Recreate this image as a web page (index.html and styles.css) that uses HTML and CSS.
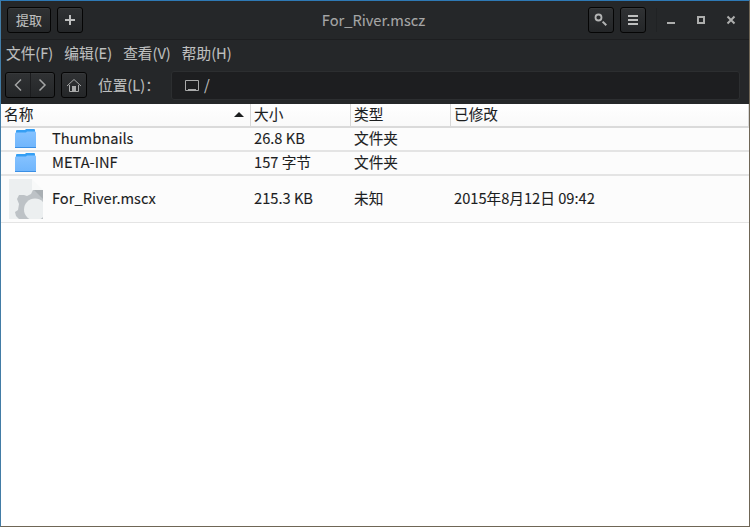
FILE: index.html
```html
<!DOCTYPE html>
<html lang="zh-CN">
<head>
<meta charset="utf-8">
<title>For_River.mscz</title>
<link rel="stylesheet" href="styles.css">
</head>
<body>
<div class="window">
  <header class="titlebar">
    <div class="side">
      <button class="btn extract">提取</button>
      <button class="btn square"><svg width="24" height="24"><path d="M7 12h10M12 7v10" stroke="#bebfbf" stroke-width="2"/></svg></button>
    </div>
    <h1 class="title">For_River.mscz</h1>
    <div class="side end">
      <button class="btn square"><svg width="24" height="24"><circle cx="9.500" cy="9.500" r="3" fill="none" stroke="#b4b5b5" stroke-width="1.8"/><path d="M13.600 13.600l3.700 3.700" stroke="#b4b5b5" stroke-width="2"/></svg></button>
      <button class="btn square"><svg width="24" height="24"><path d="M7 8h10M7 12h10M7 16h10" stroke="#bebfbf" stroke-width="2"/></svg></button>
      <div class="controls">
        <svg width="30" height="24"><path d="M10 15h8" stroke="#adaead" stroke-width="2"/></svg>
        <svg width="30" height="24"><path d="M11 9h6v6h-6z" fill="none" stroke="#adaead" stroke-width="2"/></svg>
        <svg width="28" height="24"><path d="M10.500 8.500l7 7M17.500 8.500l-7 7" stroke="#adaead" stroke-width="2"/></svg>
      </div>
    </div>
  </header>
  <nav class="menubar"><span>文件(F)</span><span>编辑(E)</span><span>查看(V)</span><span>帮助(H)</span></nav>
  <div class="toolbar">
    <div class="nav">
      <button><svg width="24" height="24"><path d="M15 6.500L9.500 12l5.500 5.500" fill="none" stroke="#a4a5a5" stroke-width="1.500"/></svg></button>
      <button><svg width="24" height="24"><path d="M8.500 6.500L14 12l-5.500 5.500" fill="none" stroke="#a4a5a5" stroke-width="1.500"/></svg></button>
    </div>
    <button class="btn square"><svg width="24" height="24"><path d="M5 13l7-6.500 7 6.500M7.500 12v6.500h9V12" fill="none" stroke="#a9aaaa"/><path d="M10 13h4v5h-4z" fill="#a9aaaa"/></svg></button>
    <label class="label">位置(L)：</label>
    <div class="entry">
      <svg width="14" height="11"><path d="M.5.5h13v10H.5z" fill="none" stroke="#a9aaaa"/><path d="M3 9.500h8" stroke="#a9aaaa"/></svg>
      <span>/</span>
    </div>
  </div>
  <main class="list">
    <div class="row head">
      <div class="cell">名称<svg class="sort" width="10" height="5"><path d="M0 5L5 0l5 5z" fill="#1c1e1f"/></svg></div>
      <div class="cell">大小</div><div class="cell">类型</div><div class="cell">已修改</div>
    </div>
    <div class="row">
      <div class="cell name"><svg class="folder" width="21" height="19"><use href="#folder"/></svg>Thumbnails</div>
      <div class="cell">26.8 KB</div><div class="cell">文件夹</div><div class="cell"></div>
    </div>
    <div class="row">
      <div class="cell name"><svg class="folder" width="21" height="19"><use href="#folder"/></svg>META-INF</div>
      <div class="cell">157 字节</div><div class="cell">文件夹</div><div class="cell"></div>
    </div>
    <div class="row tall">
      <div class="cell name"><svg class="doc" width="34" height="40">
        <clipPath id="page"><path d="M0 0h23v11h11v29H0z"/></clipPath>
        <path d="M0 0h23v11h11v29H0z" fill="#eceff0"/><path d="M23 0l11 11H23z" fill="#f8f9f9"/>
        <g clip-path="url(#page)">
          <path d="M10 16h5l3 1 4-2 2-4h10v29H10l-3-3-1-4 3-2 1-6-2-5z" fill="#bdc2c6"/>
          <path d="M25 11h9v9z" fill="#a9afb3"/><circle cx="26" cy="30.500" r="11" fill="#eceff0"/>
        </g>
      </svg>For_River.mscx</div>
      <div class="cell">215.3 KB</div><div class="cell">未知</div><div class="cell">2015年8月12日 09:42</div>
    </div>
  </main>
</div>
<svg class="defs" width="0" height="0">
  <defs>
    <linearGradient id="blue" x2="0" y2="1"><stop stop-color="#85c2ff"/><stop offset="1" stop-color="#6fb5fc"/></linearGradient>
    <g id="folder"><path d="M1 5V2q0-1 1-1h8l1-1h8q1 0 1 1v4z" fill="#359ff4"/><path d="M0 4.500q0-1 1-1h10l1-1h8q1 0 1 1V19H0z" fill="url(#blue)"/><path d="M0 18.500h21" stroke="#3b8fe4"/></g>
  </defs>
</svg>
</body>
</html>
```
FILE: styles.css
```css
* { box-sizing: border-box; }
body { margin: 0; font: 14.667px/22px "Noto Sans CJK SC", "Noto Sans", sans-serif; color: #1c1e1f; -webkit-text-stroke: .1px; }
svg { display: block; flex: none; }
.defs { position: absolute; }
button { font: inherit; color: inherit; padding: 0; margin: 0; border: 0; background: none; }
.window { width: 750px; height: 527px; background: #252729; border: 1px solid #427ca6; border-top-color: #2e79b5; border-bottom-color: #6f6656; border-right-color: #6f6656; display: flex; flex-direction: column; overflow: hidden; }
.titlebar { height: 39px; flex: none; display: grid; grid-template-columns: 1fr auto 1fr; align-items: center; padding: 0 4px 0 6px; border-bottom: 1px solid #1d1e20; color: #bebfbf; }
.side { display: flex; gap: 6px; align-items: center; }
.end { justify-content: flex-end; }
.btn, .nav { border: 1px solid #050505; border-radius: 3px; background: linear-gradient(#303234, #242628); box-shadow: inset 0 1px #37393b; height: 26px; }
.btn { display: flex; align-items: center; justify-content: center; }
.extract { width: 44px; font-size: 13px; }
.square { width: 26px; }
.title { margin: 0; padding-right: 5px; font-size: 14.667px; font-weight: 400; color: #a5a6a6; }
.controls { display: flex; margin: 0 0 0 4px; border-left: 1px solid #202224; }
.menubar { height: 28px; flex: none; display: flex; gap: 11px; padding: 2px 5px; color: #bebfbf; }
.toolbar { height: 36px; flex: none; display: flex; align-items: center; padding: 0 9px 2px 4px; color: #bebfbf; }
.nav { display: flex; width: 50px; margin-right: 6px; }
.nav button { width: 24px; height: 24px; }
.nav button + button { border-left: 1px solid #1b1c1e; }
.label { margin-left: 11px; width: 73px; white-space: nowrap; }
.entry { flex: 1; height: 29px; display: flex; align-items: center; gap: 5px; padding-left: 13px; border: 1px solid #2c2e30; border-radius: 3px; background: #1d1e20; }
.list { flex: 1; background: #fff; }
.row { display: grid; grid-template-columns: 250px 100px 100px 1fr; height: 24px; border-bottom: 2px solid #e4e4e4; background: #fcfcfc; line-height: 20px; }
.cell { padding: 0 0 2px 3px; display: flex; align-items: center; white-space: nowrap; }
.head { background: linear-gradient(#fff, #f9f9f9); border-bottom-color: #dadada; }
.head .cell { border-right: 1px solid #d8d8d8; }
.sort { margin: 1px 6px 0 auto; }
.tall { height: 47px; border-bottom-width: 1px; }
.tall .cell { padding-bottom: 3px; }
.folder { margin: 1px 16px 0 11px; }
.doc { margin: 3px 9px 0 5px; }
```
